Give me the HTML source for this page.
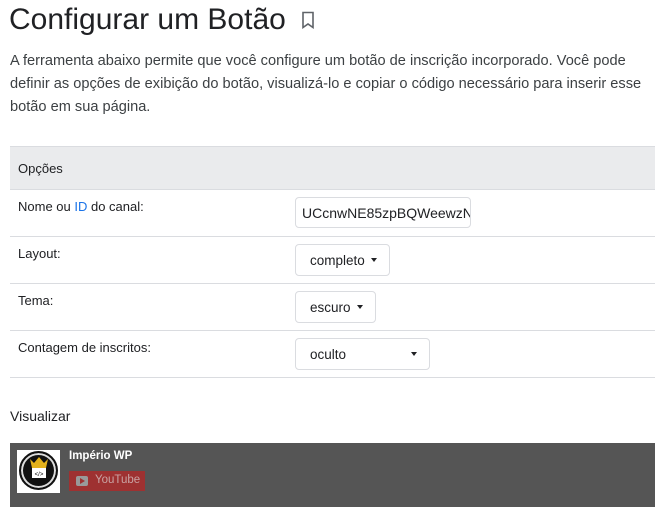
<!DOCTYPE html>
<html><head><meta charset="utf-8"><style>
body{margin:0;width:665px;height:518px;background:#fff;font-family:"Liberation Sans",Arial,sans-serif;color:#202124;position:relative;overflow:hidden}
.a{position:absolute}
h1{position:absolute;left:9px;top:2px;margin:0;font-weight:400;font-size:30px;line-height:36px;color:#202124;white-space:nowrap}
p{position:absolute;left:10px;top:50px;width:650px;margin:0;font-size:14.6px;line-height:23px;color:#3c4043}
.hdr{left:10px;top:146px;width:645px;height:44px;background:#eaebed;border-top:1px solid #dadce0;border-bottom:1px solid #dadce0;box-sizing:border-box}
.row{left:10px;width:645px;height:47px;border-bottom:1px solid #dadce0;box-sizing:border-box;font-size:13px}
.row span{position:absolute;left:8px;top:9px}
.in{position:absolute;border:1px solid #dadce0;border-radius:4px;box-sizing:border-box;font-size:13.5px;color:#202124;background:#fff}
.tri{position:absolute;width:0;height:0;border-left:3.5px solid transparent;border-right:3.5px solid transparent;border-top:4px solid #202124}
</style></head><body>
<h1>Configurar um Botão</h1>
<svg class="a" style="left:301px;top:11px" width="14" height="18" viewBox="0 0 14 18"><path d="M2 1.5h10v15l-5-3.5-5 3.5z" fill="none" stroke="#5f6368" stroke-width="1.6"/></svg>
<p>A ferramenta abaixo permite que você configure um botão de inscrição incorporado. Você pode definir as opções de exibição do botão, visualizá-lo e copiar o código necessário para inserir esse botão em sua página.</p>
<div class="a hdr"><span class="a" style="left:8px;top:14px;font-size:13px">Opções</span></div>
<div class="a row" style="top:190px"><span>Nome ou <b style="color:#1a73e8;font-weight:400">ID</b> do canal:</span></div>
<div class="a row" style="top:237px"><span>Layout:</span></div>
<div class="a row" style="top:284px"><span>Tema:</span></div>
<div class="a row" style="top:331px"><span>Contagem de inscritos:</span></div>
<div class="in" style="left:295px;top:197px;width:176px;height:31px;overflow:hidden;padding:7px 0 0 6px;white-space:nowrap;font-size:14px">UCcnwNE85zpBQWeewzN</div>
<div class="in" style="left:295px;top:244px;width:95px;height:32px;padding:8px 0 0 14px">completo</div><div class="tri" style="left:371px;top:258px"></div>
<div class="in" style="left:295px;top:291px;width:81px;height:32px;padding:8px 0 0 14px">escuro</div><div class="tri" style="left:357px;top:305px"></div>
<div class="in" style="left:295px;top:338px;width:135px;height:32px;padding:8px 0 0 14px">oculto</div><div class="tri" style="left:411px;top:352px"></div>
<div class="a" style="left:10px;top:408px;font-size:14px">Visualizar</div>
<div class="a" style="left:10px;top:443px;width:645px;height:64px;background:#555"></div>
<div class="a" style="left:17px;top:450px;width:43px;height:43px;background:#fff"></div>
<div class="a" style="left:19px;top:451px;width:39px;height:39px;border-radius:50%;background:#111;box-sizing:border-box;border:2px solid #111;box-shadow:inset 0 0 0 2px #ddd"></div>
<svg class="a" style="left:28px;top:456px" width="22" height="24" viewBox="0 0 22 24"><path d="M2 3l4 4 5-6 5 6 4-4-2 9H4z" fill="#e4b21c"/><rect x="4" y="12" width="14" height="10" fill="#fff"/><text x="11" y="20" font-size="6" text-anchor="middle" font-family="Liberation Sans">&lt;/&gt;</text></svg>
<div class="a" style="left:69px;top:450px;color:#fff;font-weight:bold;font-size:11.5px">Império WP</div>
<div class="a" style="left:69px;top:471px;width:76px;height:20px;background:#9e3131"></div>
<div class="a" style="left:76px;top:476px;width:12px;height:10px;background:#999;border-radius:2px"></div>
<div class="tri" style="left:80px;top:478px;border:0;border-top:3px solid transparent;border-bottom:3px solid transparent;border-left:5px solid #9e3131"></div>
<div class="a" style="left:95px;top:474px;color:#c9a3a3;font-size:11.5px">YouTube</div>
</body></html>
